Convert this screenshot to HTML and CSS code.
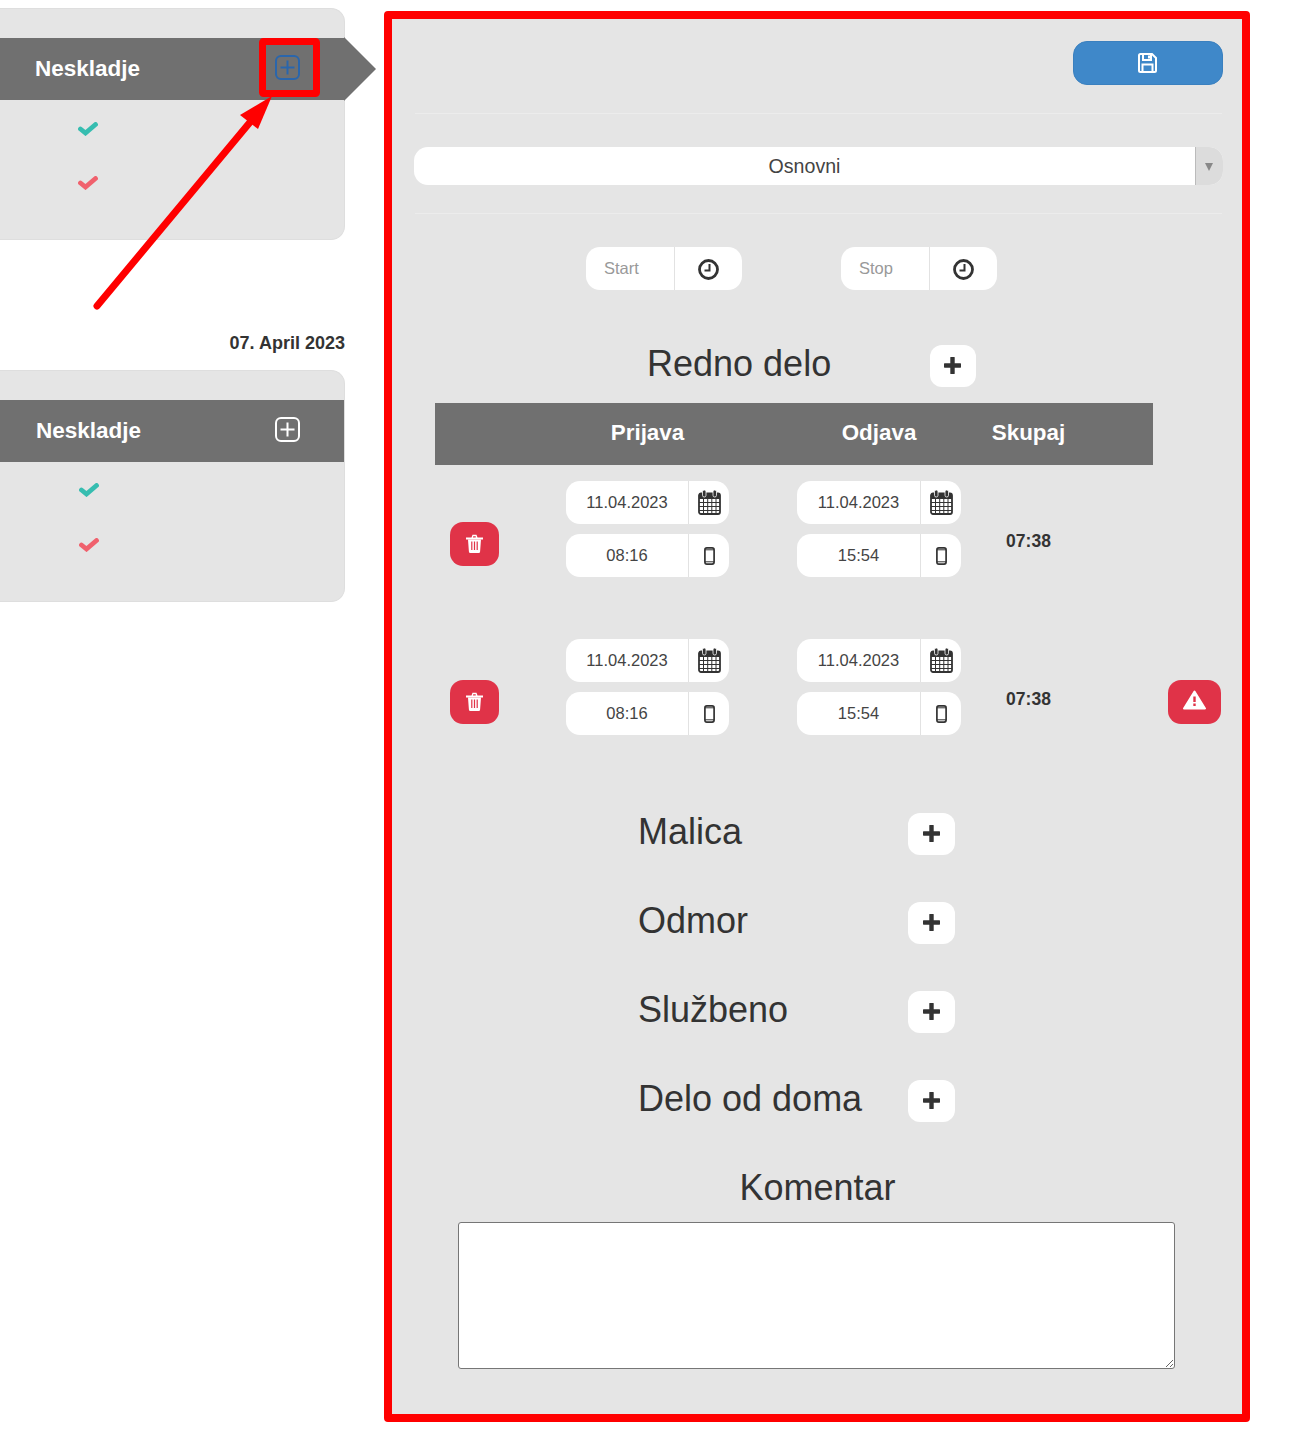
FILE: index.html
```html
<!DOCTYPE html>
<html lang="en">
<head>
    <meta charset="UTF-8">
    <meta name="viewport" content="width=device-width, initial-scale=1.0">
    <title>Neskladje</title>
    <link rel="stylesheet" href="styles.css">
</head>
<body>
    <svg class="sprite" xmlns="http://www.w3.org/2000/svg">
        <symbol id="i-check" viewBox="0 0 20 14"><path d="M2.500 7 7.500 11 17.500 2.500" fill="none" stroke="currentColor" stroke-width="4.800" stroke-linecap="round" stroke-linejoin="miter"/></symbol>
        <symbol id="i-plus-box" viewBox="0 0 25 25"><rect x="1" y="1" width="23" height="23" rx="5" fill="none" stroke="currentColor" stroke-width="2"/><path d="M12.500 5.500v14M5.500 12.500h14" stroke="currentColor" stroke-width="2"/></symbol>
        <symbol id="i-plus" viewBox="0 0 17 17"><path d="M8.500 1v15M1 8.500h15" stroke="currentColor" stroke-width="4.400" stroke-linecap="round"/></symbol>
        <symbol id="i-save" viewBox="0 0 19 20"><path d="M2.500 1H14l4 4v12.500a1.500 1.500 0 0 1-1.500 1.500h-14A1.500 1.500 0 0 1 1 17.500v-15A1.500 1.500 0 0 1 2.500 1z" fill="none" stroke="currentColor" stroke-width="2"/><path d="M5 1.500v5.500h8V1.500M4.500 19v-7.500h10V19" fill="none" stroke="currentColor" stroke-width="2"/><path d="M10 2.500h2v3h-2z" fill="currentColor"/></symbol>
        <symbol id="i-clock" viewBox="0 0 21 21"><circle cx="10.500" cy="10.500" r="9" fill="none" stroke="currentColor" stroke-width="2.800"/><path d="M11.500 5v6.500H6.500" fill="none" stroke="currentColor" stroke-width="2"/></symbol>
        <symbol id="i-calendar" viewBox="0 0 23 25"><rect x="1" y="3.500" width="21" height="20.500" rx="2" fill="none" stroke="currentColor" stroke-width="1.800"/><path d="M1 3.500h21v5.500H1z" fill="currentColor"/><path d="M1 12.500h21M1 16.500h21M1 20.500h21M5.500 9v15M9.700 9v15M13.800 9v15M18 9v15" stroke="currentColor" stroke-width="1"/><rect x="4.500" y="0" width="3.500" height="7" rx="1.700" fill="currentColor" stroke="#fff" stroke-width=".8"/><rect x="15" y="0" width="3.500" height="7" rx="1.700" fill="currentColor" stroke="#fff" stroke-width=".8"/></symbol>
        <symbol id="i-mobile" viewBox="0 0 11 18"><rect x=".9" y=".9" width="9.200" height="16.200" rx="2" fill="none" stroke="currentColor" stroke-width="1.700"/><path d="M1 2.800h9M1 14.800h9" stroke="currentColor" stroke-width="1"/></symbol>
        <symbol id="i-trash" viewBox="0 0 17 19"><path d="M0 3.500h17v2H0zM5.500 3.500 6.500 .8h4l1 2.700h-1.800L9.800 2.200H7.200L7 3.500z" fill="currentColor"/><path d="M2 5.500h13l-.9 12a1.500 1.500 0 0 1-1.500 1.500H4.400a1.500 1.500 0 0 1-1.500-1.500z" fill="currentColor"/><path d="M5.800 7.500v8.500M8.500 7.500v8.500M11.200 7.500v8.500" stroke="#e03348" stroke-width="1.200"/></symbol>
        <symbol id="i-warning" viewBox="0 0 23 20"><path d="M11.500 1.500 22 18.500H1z" fill="currentColor" stroke="currentColor" stroke-width="2" stroke-linejoin="round"/><path d="M11.500 6.500v5.500" stroke="#e03348" stroke-width="2.400"/><path d="M11.500 13.500v2.500" stroke="#e03348" stroke-width="2.400"/></symbol>
    </svg>

    <div class="page">
        <aside class="sidebar">
            <div class="card">
                <div class="band band-active">
                    <span class="band-title">Neskladje</span>
                    <svg class="icon-plus-box icon-blue"><use href="#i-plus-box"/></svg>
                </div>
                <div class="checks">
                    <svg class="icon-check icon-teal"><use href="#i-check"/></svg>
                    <svg class="icon-check icon-red"><use href="#i-check"/></svg>
                </div>
            </div>

            <div class="date">07. April 2023</div>

            <div class="card card-second">
                <div class="band">
                    <span class="band-title">Neskladje</span>
                    <svg class="icon-plus-box"><use href="#i-plus-box"/></svg>
                </div>
                <div class="checks">
                    <svg class="icon-check icon-teal"><use href="#i-check"/></svg>
                    <svg class="icon-check icon-red"><use href="#i-check"/></svg>
                </div>
            </div>
        </aside>

        <main class="panel">
            <div class="toolbar">
                <button class="btn-save" type="button"><svg class="icon-save"><use href="#i-save"/></svg></button>
            </div>
            <hr class="line line-top">

            <div class="select-box">
                <span class="select-text">Osnovni</span>
                <span class="select-arrow"></span>
            </div>
            <hr class="line line-bottom">

            <div class="times">
                <div class="time-field">
                    <span class="time-text">Start</span>
                    <span class="time-addon"><svg class="icon-clock"><use href="#i-clock"/></svg></span>
                </div>
                <div class="time-field">
                    <span class="time-text">Stop</span>
                    <span class="time-addon"><svg class="icon-clock"><use href="#i-clock"/></svg></span>
                </div>
            </div>

            <div class="section section-main">
                <h2 class="section-title">Redno delo</h2>
                <button class="btn-plus" type="button"><svg class="icon-plus"><use href="#i-plus"/></svg></button>
            </div>

            <div class="table-head">
                <span class="col-in">Prijava</span>
                <span class="col-out">Odjava</span>
                <span class="col-sum">Skupaj</span>
            </div>

            <div class="entry">
                <button class="btn-red btn-delete" type="button"><svg class="icon-trash"><use href="#i-trash"/></svg></button>
                <div class="stack col-in">
                    <div class="field"><span class="field-text">11.04.2023</span><span class="field-addon"><svg class="icon-calendar"><use href="#i-calendar"/></svg></span></div>
                    <div class="field"><span class="field-text">08:16</span><span class="field-addon"><svg class="icon-mobile"><use href="#i-mobile"/></svg></span></div>
                </div>
                <div class="stack col-out">
                    <div class="field"><span class="field-text">11.04.2023</span><span class="field-addon"><svg class="icon-calendar"><use href="#i-calendar"/></svg></span></div>
                    <div class="field"><span class="field-text">15:54</span><span class="field-addon"><svg class="icon-mobile"><use href="#i-mobile"/></svg></span></div>
                </div>
                <div class="total col-sum">07:38</div>
            </div>

            <div class="entry">
                <button class="btn-red btn-delete" type="button"><svg class="icon-trash"><use href="#i-trash"/></svg></button>
                <div class="stack col-in">
                    <div class="field"><span class="field-text">11.04.2023</span><span class="field-addon"><svg class="icon-calendar"><use href="#i-calendar"/></svg></span></div>
                    <div class="field"><span class="field-text">08:16</span><span class="field-addon"><svg class="icon-mobile"><use href="#i-mobile"/></svg></span></div>
                </div>
                <div class="stack col-out">
                    <div class="field"><span class="field-text">11.04.2023</span><span class="field-addon"><svg class="icon-calendar"><use href="#i-calendar"/></svg></span></div>
                    <div class="field"><span class="field-text">15:54</span><span class="field-addon"><svg class="icon-mobile"><use href="#i-mobile"/></svg></span></div>
                </div>
                <div class="total col-sum">07:38</div>
                <button class="btn-red btn-warn" type="button"><svg class="icon-warning"><use href="#i-warning"/></svg></button>
            </div>

            <div class="sections">
                <div class="section">
                    <h2 class="section-title">Malica</h2>
                    <button class="btn-plus" type="button"><svg class="icon-plus"><use href="#i-plus"/></svg></button>
                </div>
                <div class="section">
                    <h2 class="section-title">Odmor</h2>
                    <button class="btn-plus" type="button"><svg class="icon-plus"><use href="#i-plus"/></svg></button>
                </div>
                <div class="section">
                    <h2 class="section-title">Službeno</h2>
                    <button class="btn-plus" type="button"><svg class="icon-plus"><use href="#i-plus"/></svg></button>
                </div>
                <div class="section">
                    <h2 class="section-title">Delo od doma</h2>
                    <button class="btn-plus" type="button"><svg class="icon-plus"><use href="#i-plus"/></svg></button>
                </div>
            </div>

            <div class="comment">
                <h2 class="comment-title">Komentar</h2>
                <textarea class="comment-box"></textarea>
            </div>
        </main>
    </div>

    <!-- red markup drawn on top of the screenshot -->
    <svg class="markup" viewBox="0 0 400 320" xmlns="http://www.w3.org/2000/svg">
        <rect x="262.500" y="41.500" width="54" height="52" rx="1" fill="none" stroke="#ff0000" stroke-width="7"/>
        <path d="M97 306 256 115" stroke="#ff0000" stroke-width="7" stroke-linecap="round"/>
        <path d="M272 96 240 115 258 129z" fill="#ff0000"/>
    </svg>
</body>
</html>
```

FILE: styles.css
```css
body {
    margin: 0;
    font-family: 'Liberation Sans', Arial, sans-serif;
    color: #333;
    background-color: #fff;
}
.sprite {
    display: none;
}
.page {
    display: flex;
    align-items: flex-start;
    padding-top: 8px;
}
.markup {
    position: absolute;
    top: 0;
    left: 0;
    width: 400px;
    height: 320px;
    pointer-events: none;
}

/* left column */
.sidebar {
    width: 345px;
    flex-shrink: 0;
}
.card {
    box-sizing: border-box;
    height: 232px;
    padding-top: 29px;
    background: #e5e5e5;
    border: 1px solid #dedede;
    border-left: none;
    border-radius: 0 14px 14px 0;
}
.band {
    position: relative;
    display: flex;
    align-items: center;
    justify-content: space-between;
    height: 62px;
    padding: 0 44px 0 35px;
    background: #707070;
    color: #fff;
}
.band-active::after {
    content: "";
    position: absolute;
    top: -1px;
    left: 100%;
    border-left: 32px solid #707070;
    border-top: 32px solid transparent;
    border-bottom: 32px solid transparent;
}
.band-title {
    font-size: 22.500px;
    font-weight: bold;
}
.card-second .band {
    padding-left: 36px;
}
.card-second .checks {
    padding: 21px 0 0 79px;
    gap: 41px;
}
.checks {
    display: flex;
    flex-direction: column;
    gap: 40px;
    padding: 22px 0 0 78px;
}
.icon-plus-box {
    width: 25px;
    height: 25px;
    margin-bottom: 3px;
}
.icon-blue {
    color: #2a66ac;
}
.icon-check {
    display: block;
    width: 20px;
    height: 14px;
}
.icon-teal {
    color: #36bdb0;
}
.icon-red {
    color: #f0616d;
}
.date {
    margin-top: 92px;
    height: 38px;
    line-height: 22px;
    text-align: right;
    font-size: 18px;
    font-weight: bold;
}

/* right panel */
.panel {
    box-sizing: border-box;
    width: 866px;
    height: 1411px;
    margin: 3px 0 0 39px;
    padding: 22px 18px 0 22px;
    background: #e5e5e5;
    border: 8px solid #ff0000;
    border-radius: 4px;
}
.toolbar {
    display: flex;
    justify-content: flex-end;
    margin-right: 1px;
}
.btn-save {
    display: flex;
    align-items: center;
    justify-content: center;
    width: 150px;
    height: 44px;
    padding: 0 1px 0 0;
    background: #3f88c9;
    border: 1px solid #3a80bf;
    border-radius: 14px;
    color: #fff;
}
.icon-save {
    width: 19px;
    height: 20px;
}
.line {
    height: 1px;
    margin: 0 2px 0 1px;
    background: #ececec;
    border: none;
}
.line-top {
    margin-top: 28px;
}
.line-bottom {
    margin-top: 28px;
}
.select-box {
    display: flex;
    height: 38px;
    margin: 33px 1px 0 0;
    border-radius: 14px;
    overflow: hidden;
    background: #fff;
}
.select-text {
    flex: 1;
    line-height: 38px;
    text-align: center;
    font-size: 19.600px;
    color: #444;
}
.select-arrow {
    position: relative;
    width: 27px;
    background: #dcdcdc;
    border-left: 1px solid #bbb;
}
.select-arrow::after {
    content: "";
    position: absolute;
    top: 16px;
    left: 9px;
    border-top: 8px solid #888;
    border-left: 4.500px solid transparent;
    border-right: 4.500px solid transparent;
}
.times {
    display: flex;
    gap: 99px;
    margin: 33px 0 0 172px;
}
.time-field {
    display: flex;
    width: 156px;
    height: 43px;
    background: #fff;
    border-radius: 14px;
}
.time-text {
    width: 88px;
    padding-left: 18px;
    box-sizing: border-box;
    line-height: 43px;
    font-size: 16.500px;
    color: #999;
}
.time-addon {
    flex: 1;
    display: flex;
    align-items: center;
    justify-content: center;
    padding-top: 1px;
    border-left: 1px solid #e2e2e2;
}
.icon-clock {
    width: 21px;
    height: 21px;
}

/* section headings */
.section {
    display: grid;
    grid-template-columns: 270px 47px;
    align-items: center;
    height: 42px;
    padding-left: 224px;
}
.section-main {
    grid-template-columns: 283px 46px;
    margin-top: 55px;
    padding-left: 233px;
}
.section-main .icon-plus {
    margin-right: 2px;
}
.section-title {
    margin: 0;
    padding-bottom: 4px;
    font-size: 36px;
    font-weight: normal;
    line-height: 36px;
    color: #333;
}
.btn-plus {
    display: flex;
    align-items: center;
    justify-content: center;
    height: 42px;
    padding: 0 0 2px;
    background: #fff;
    border: none;
    border-radius: 12px;
    color: #333;
}
.icon-plus {
    width: 17px;
    height: 17px;
}
.sections {
    display: flex;
    flex-direction: column;
    gap: 47px;
    margin-top: 78px;
}

/* entries */
.table-head,
.entry {
    display: grid;
    grid-template-columns: 131px 163px 68px 164px 135px 72px 53px;
    margin-left: 21px;
}
.table-head {
    grid-template-columns: 131px 163px 68px 164px 135px 57px;
    width: 718px;
    height: 62px;
    margin-top: 16px;
    background: #707070;
    color: #fff;
    font-size: 22.400px;
    font-weight: bold;
    line-height: 60px;
    text-align: center;
}
.entry {
    margin-top: 62px;
}
.table-head + .entry {
    margin-top: 16px;
}
.col-in {
    grid-column: 2;
}
.col-out {
    grid-column: 4;
}
.col-sum {
    grid-column: 5;
}
.stack {
    display: flex;
    flex-direction: column;
    gap: 10px;
}
.field {
    display: flex;
    height: 43px;
    background: #fff;
    border-radius: 14px;
}
.field-text {
    flex: 1;
    line-height: 43px;
    text-align: center;
    font-size: 16.500px;
    color: #444;
}
.field-addon {
    display: flex;
    align-items: center;
    justify-content: center;
    width: 41px;
    box-sizing: border-box;
    border-left: 1px solid #e2e2e2;
}
.icon-calendar {
    width: 23px;
    height: 25px;
}
.icon-mobile {
    width: 11px;
    height: 18px;
}
.total {
    align-self: end;
    margin-bottom: 26px;
    line-height: 20px;
    text-align: center;
    font-size: 17.500px;
    font-weight: bold;
}
.btn-red {
    display: flex;
    align-items: center;
    justify-content: center;
    height: 44px;
    padding: 0;
    align-self: end;
    margin-bottom: 11px;
    background: #e03348;
    border: none;
    border-radius: 13px;
    color: #fff;
}
.btn-delete {
    grid-column: 1;
    grid-row: 1;
    justify-self: start;
    width: 49px;
    margin-left: 15px;
}
.btn-warn {
    grid-column: 7;
    grid-row: 1;
}
.icon-trash {
    width: 17px;
    height: 19px;
    margin-bottom: 1px;
}
.icon-warning {
    width: 23px;
    height: 20px;
    margin-bottom: 4px;
}

/* comment */
.comment {
    width: 717px;
    margin: 46px 0 0 44px;
}
.comment-title {
    margin: 0 0 14px;
    padding-left: 2px;
    font-size: 36px;
    font-weight: normal;
    line-height: 40px;
    text-align: center;
    color: #333;
}
.comment-box {
    display: block;
    box-sizing: border-box;
    width: 717px;
    height: 147px;
    background: #fff;
    border: 1px solid #767676;
    border-radius: 3px;
}
```
